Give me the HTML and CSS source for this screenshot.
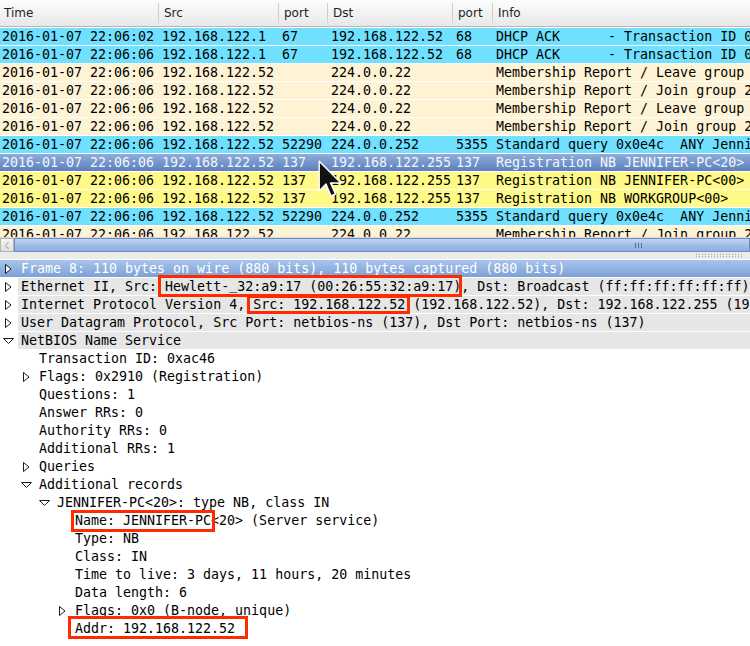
FILE: index.html
```html
<!DOCTYPE html>
<html lang="en">
<head>
  <meta charset="UTF-8">
  <title>Packet capture</title>
  <link rel="stylesheet" href="styles.css">
</head>
<body>
<div class="app">

  <!-- Packet list -->
  <div class="plist-head">
    <div class="hc first">Time</div>
    <div class="hc">Src</div>
    <div class="hc">port</div>
    <div class="hc">Dst</div>
    <div class="hc">port</div>
    <div class="hc">Info</div>
  </div>

  <div class="prows">
    <div class="prow udp"><span>2016-01-07 22:06:02</span><span>192.168.122.1</span><span>67</span><span>192.168.122.52</span><span>68</span><span>DHCP ACK      - Transaction ID 0x2d4e6c1a</span></div>
    <div class="prow udp"><span>2016-01-07 22:06:06</span><span>192.168.122.1</span><span>67</span><span>192.168.122.52</span><span>68</span><span>DHCP ACK      - Transaction ID 0x2d4e6c1a</span></div>
    <div class="prow igmp"><span>2016-01-07 22:06:06</span><span>192.168.122.52</span><span></span><span>224.0.0.22</span><span></span><span>Membership Report / Leave group 224.0.0.252</span></div>
    <div class="prow igmp"><span>2016-01-07 22:06:06</span><span>192.168.122.52</span><span></span><span>224.0.0.22</span><span></span><span>Membership Report / Join group 224.0.0.252 for any sources</span></div>
    <div class="prow igmp"><span>2016-01-07 22:06:06</span><span>192.168.122.52</span><span></span><span>224.0.0.22</span><span></span><span>Membership Report / Leave group 224.0.0.252</span></div>
    <div class="prow igmp"><span>2016-01-07 22:06:06</span><span>192.168.122.52</span><span></span><span>224.0.0.22</span><span></span><span>Membership Report / Join group 224.0.0.252 for any sources</span></div>
    <div class="prow udp"><span>2016-01-07 22:06:06</span><span>192.168.122.52</span><span>52290</span><span>224.0.0.252</span><span>5355</span><span>Standard query 0x0e4c  ANY Jennifer-PC</span></div>
    <div class="prow sel"><span>2016-01-07 22:06:06</span><span>192.168.122.52</span><span>137</span><span>192.168.122.255</span><span>137</span><span>Registration NB JENNIFER-PC&lt;20&gt;</span></div>
    <div class="prow nb"><span>2016-01-07 22:06:06</span><span>192.168.122.52</span><span>137</span><span>192.168.122.255</span><span>137</span><span>Registration NB JENNIFER-PC&lt;00&gt;</span></div>
    <div class="prow nb"><span>2016-01-07 22:06:06</span><span>192.168.122.52</span><span>137</span><span>192.168.122.255</span><span>137</span><span>Registration NB WORKGROUP&lt;00&gt;</span></div>
    <div class="prow udp"><span>2016-01-07 22:06:06</span><span>192.168.122.52</span><span>52290</span><span>224.0.0.252</span><span>5355</span><span>Standard query 0x0e4c  ANY Jennifer-PC</span></div>
    <div class="prow igmp"><span>2016-01-07 22:06:06</span><span>192.168.122.52</span><span></span><span>224.0.0.22</span><span></span><span>Membership Report / Join group 224.0.0.252 for any sources</span></div>
  </div>

  <div class="hscroll">
    <div class="sbtn">
      <svg width="6" height="9" viewBox="0 0 6 9"><path d="M4.5 1 L1.5 4.5 L4.5 8" fill="none" stroke="#9a9a9a" stroke-width="1"/></svg>
    </div>
    <div class="sthumb"><span class="grip"></span></div>
  </div>

  <div class="split"><span class="dots"></span></div>

  <!-- Packet details -->
  <div class="tree">
    <div class="trow top sel">
      <span class="tw"><svg width="10" height="10" viewBox="0 0 10 10"><path d="M2.5 0.5 L8 5 L2.5 9.5 Z" fill="#fff" stroke="#1a1a1a"/></svg></span>
      <span class="lbl">Frame 8: 110 bytes on wire (880 bits), 110 bytes captured (880 bits)</span>
    </div>
    <div class="trow top">
      <span class="tw"><svg width="10" height="10" viewBox="0 0 10 10"><path d="M2.5 0.5 L8 5 L2.5 9.5 Z" fill="#fff" stroke="#1a1a1a"/></svg></span>
      <span class="lbl">Ethernet II, Src: Hewlett-<span class="us">_</span>32:a9:17 (00:26:55:32:a9:17), Dst: Broadcast (ff:ff:ff:ff:ff:ff)</span>
    </div>
    <div class="trow top">
      <span class="tw"><svg width="10" height="10" viewBox="0 0 10 10"><path d="M2.5 0.5 L8 5 L2.5 9.5 Z" fill="#fff" stroke="#1a1a1a"/></svg></span>
      <span class="lbl">Internet Protocol Version 4, Src: 192.168.122.52 (192.168.122.52), Dst: 192.168.122.255 (192.168.122.255)</span>
    </div>
    <div class="trow top">
      <span class="tw"><svg width="10" height="10" viewBox="0 0 10 10"><path d="M2.5 0.5 L8 5 L2.5 9.5 Z" fill="#fff" stroke="#1a1a1a"/></svg></span>
      <span class="lbl">User Datagram Protocol, Src Port: netbios-ns (137), Dst Port: netbios-ns (137)</span>
    </div>
    <div class="trow top">
      <span class="tw"><svg width="11" height="10" viewBox="0 0 11 10"><path d="M0.5 2.5 L10.5 2.5 L5.5 7.5 Z" fill="#fff" stroke="#1a1a1a"/></svg></span>
      <span class="lbl">NetBIOS Name Service</span>
    </div>
    <div class="trow lv1"><span class="tw"></span><span class="lbl">Transaction ID: 0xac46</span></div>
    <div class="trow lv1">
      <span class="tw"><svg width="10" height="10" viewBox="0 0 10 10"><path d="M2.5 0.5 L8 5 L2.5 9.5 Z" fill="#fff" stroke="#1a1a1a"/></svg></span>
      <span class="lbl">Flags: 0x2910 (Registration)</span>
    </div>
    <div class="trow lv1"><span class="tw"></span><span class="lbl">Questions: 1</span></div>
    <div class="trow lv1"><span class="tw"></span><span class="lbl">Answer RRs: 0</span></div>
    <div class="trow lv1"><span class="tw"></span><span class="lbl">Authority RRs: 0</span></div>
    <div class="trow lv1"><span class="tw"></span><span class="lbl">Additional RRs: 1</span></div>
    <div class="trow lv1">
      <span class="tw"><svg width="10" height="10" viewBox="0 0 10 10"><path d="M2.5 0.5 L8 5 L2.5 9.5 Z" fill="#fff" stroke="#1a1a1a"/></svg></span>
      <span class="lbl">Queries</span>
    </div>
    <div class="trow lv1">
      <span class="tw"><svg width="11" height="10" viewBox="0 0 11 10"><path d="M0.5 2.5 L10.5 2.5 L5.5 7.5 Z" fill="#fff" stroke="#1a1a1a"/></svg></span>
      <span class="lbl">Additional records</span>
    </div>
    <div class="trow lv2">
      <span class="tw"><svg width="11" height="10" viewBox="0 0 11 10"><path d="M0.5 2.5 L10.5 2.5 L5.5 7.5 Z" fill="#fff" stroke="#1a1a1a"/></svg></span>
      <span class="lbl">JENNIFER-PC&lt;20&gt;: type NB, class IN</span>
    </div>
    <div class="trow lv3"><span class="tw"></span><span class="lbl">Name: JENNIFER-PC&lt;20&gt; (Server service)</span></div>
    <div class="trow lv3"><span class="tw"></span><span class="lbl">Type: NB</span></div>
    <div class="trow lv3"><span class="tw"></span><span class="lbl">Class: IN</span></div>
    <div class="trow lv3"><span class="tw"></span><span class="lbl">Time to live: 3 days, 11 hours, 20 minutes</span></div>
    <div class="trow lv3"><span class="tw"></span><span class="lbl">Data length: 6</span></div>
    <div class="trow lv3">
      <span class="tw"><svg width="10" height="10" viewBox="0 0 10 10"><path d="M2.5 0.5 L8 5 L2.5 9.5 Z" fill="#fff" stroke="#1a1a1a"/></svg></span>
      <span class="lbl">Flags: 0x0 (B-node, unique)</span>
    </div>
    <div class="trow lv3"><span class="tw"></span><span class="lbl">Addr: 192.168.122.52</span></div>

    <!-- annotation boxes -->
    <div class="mark mark-eth"></div>
    <div class="mark mark-ip"></div>
    <div class="mark mark-name"></div>
    <div class="mark mark-addr"></div>
  </div>

  <!-- mouse pointer -->
  <svg class="cursor" width="26" height="38" viewBox="0 0 26 38">
    <path d="M1.2 1.2 L1.2 31 L8 24 L13 36 L17.5 34 L12.5 23 L23 23 Z" fill="#111" stroke="#fff" stroke-width="1.4" stroke-linejoin="round"/>
  </svg>

</div>
</body>
</html>
```

FILE: styles.css
```css
* {
  box-sizing: border-box;
}

body {
  margin: 0;
  background: #fff;
  font-family: "DejaVu Sans Mono", "Liberation Mono", monospace;
  font-size: 13.3px;
  color: #000;
  overflow: hidden;
}

.app {
  position: relative;
  width: 750px;
  height: 646px;
  overflow: hidden;
}

/* Packet list header */
.plist-head {
  display: grid;
  grid-template-columns: 158px 120px 49px 125px 40px 1fr;
  align-items: center;
  height: 27px;
  background: linear-gradient(#fdfdfd, #e8e8e8);
  border-bottom: 1px solid #b5b5b5;
  font-family: "DejaVu Sans", sans-serif;
  font-size: 12px;
  color: #1e1e1e;
}

.hc {
  height: 20px;
  line-height: 21px;
  padding-left: 5px;
  border-left: 1px solid #cfcfcf;
  white-space: nowrap;
  overflow: hidden;
}

.hc.first {
  border-left: none;
  padding-left: 4px;
}

/* Packet list rows */
.prows {
  height: 210px;
  overflow: hidden;
}

.prow {
  display: grid;
  grid-template-columns: 158px 120px 49px 125px 40px 1fr;
  height: 18px;
  border-top: 1px solid #fff;
  line-height: 17px;
  white-space: pre;
}

.prow span {
  overflow: hidden;
  padding-left: 4px;
}

.prow span:first-child {
  padding-left: 2px;
}

.prow.udp { background: #70e0ff; }
.prow.igmp { background: #fff3d6; }
.prow.nb { background: #fffa88; }

.prow.sel {
  background: linear-gradient(#8fadda, #5c7fbd);
  color: #f4f6fa;
}

/* Horizontal scrollbar */
.hscroll {
  display: flex;
  height: 15px;
  border-top: 1px solid #d8d8d8;
}

.sbtn {
  width: 14px;
  display: flex;
  align-items: center;
  justify-content: center;
  background: linear-gradient(#f6f6f6, #dedede);
  border: 1px solid #b4b4b4;
}

.sthumb {
  flex: 1;
  display: flex;
  align-items: center;
  justify-content: flex-end;
  padding-right: 107px;
  background: linear-gradient(#c3d5ef, #a2bde6 50%, #8eaedd);
  border: 1px solid #6d8ec6;
}

.grip {
  width: 7px;
  height: 5px;
  background: repeating-linear-gradient(90deg, #4d6da3 0 1px, transparent 1px 3px);
}

/* Pane splitter */
.split {
  height: 7px;
  display: flex;
  align-items: center;
  justify-content: flex-end;
  padding-right: 8px;
  background: #ececec;
}

.dots {
  width: 47px;
  height: 5px;
  background-image: radial-gradient(circle, #a4a4a4 0.6px, transparent 0.9px);
  background-size: 3px 2.5px;
}

/* Packet details tree */
.tree {
  position: relative;
}

.trow {
  display: flex;
  height: 18px;
  border-top: 1px solid #fff;
  line-height: 17px;
  white-space: pre;
}

.tw {
  width: 18px;
  flex: none;
  display: flex;
  align-items: center;
  padding-left: 3px;
}

.lbl {
  flex: 1;
  padding-left: 3px;
}

.us {
  position: relative;
  top: -2px;
}

/* top level protocol rows are shaded right of the expander */
.trow.top {
  background: linear-gradient(90deg, transparent 18px, #e6e6e6 18px);
}

.trow.sel {
  background: linear-gradient(#a8c4ec, #7da0d6);
  color: #fff;
}

.lv1 { padding-left: 18px; }
.lv2 { padding-left: 36px; }
.lv3 { padding-left: 54px; }

/* Red annotation boxes */
.mark {
  position: absolute;
  border: 3px solid #ff2a00;
}

.mark-eth { left: 158px; top: 16px; width: 304px; height: 22px; }
.mark-ip { left: 247px; top: 36px; width: 163px; height: 19px; }
.mark-name { left: 71px; top: 251px; width: 144px; height: 22px; }
.mark-addr { left: 68px; top: 357px; width: 180px; height: 23px; }

/* Mouse pointer */
.cursor {
  position: absolute;
  left: 318px;
  top: 160px;
}
```
